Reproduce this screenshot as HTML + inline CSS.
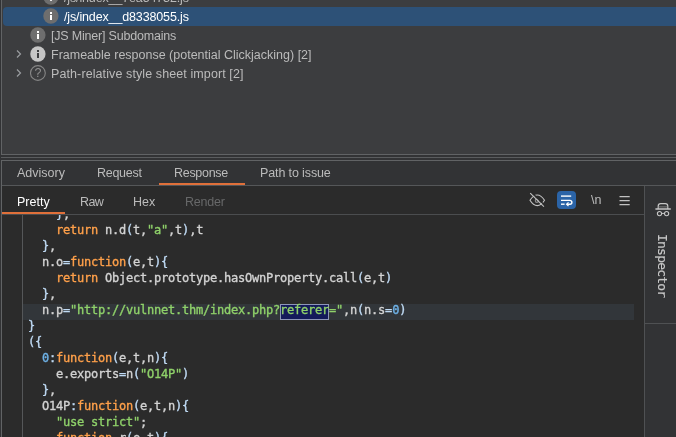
<!DOCTYPE html>
<html><head><meta charset="utf-8">
<style>
html,body{margin:0;padding:0;}
body{width:676px;height:437px;overflow:hidden;background:#323335;position:relative;font-family:"Liberation Sans",sans-serif;font-size:12.5px;color:#bbbbbb;}
.abs{position:absolute;}
.hl{position:absolute;background:#616365;}
.t{position:absolute;white-space:nowrap;line-height:19px;height:19px;margin-top:1px;will-change:transform;}
.ic{position:absolute;width:16px;height:16px;will-change:transform;}
#code{position:absolute;left:2px;top:215px;width:642px;height:222px;background:#2b2b2b;overflow:hidden;}
.ln{position:absolute;left:26px;height:16px;line-height:16px;white-space:pre;font-family:"DejaVu Sans Mono","Liberation Mono",monospace;font-size:12px;color:#d3d3d3;letter-spacing:-0.224px;will-change:transform;-webkit-text-stroke:0.35px;}
.b{color:#bfdaf4;}
.k{color:#ffa04a;}
.s{color:#8fd16a;}
.n{color:#6fb3e8;}
</style></head><body>
<!-- top panel -->
<div class="abs" style="left:2px;top:0;width:674px;height:154px;background:#3c3d3f;"></div>
<div class="hl" style="left:1px;top:0;width:1px;height:155px;"></div>
<div class="hl" style="left:1px;top:154px;width:675px;height:1px;"></div>
<div class="hl" style="left:1px;top:157px;width:675px;height:1px;background:#5a5c5e;"></div>
<div class="hl" style="left:1px;top:160px;width:675px;height:1px;"></div>
<div class="hl" style="left:1px;top:160px;width:1px;height:277px;"></div>

<!-- tree -->
<div class="abs" style="left:3px;top:7px;width:673px;height:19px;background:#2d5177;border-radius:4px 0 0 4px;"></div>

<div class="t" style="left:64px;top:-12px;letter-spacing:-0.14px;">/js/index__7ea54732.js</div>
<div class="t" style="left:64px;top:7px;color:#ffffff;letter-spacing:-0.14px;">/js/index__d8338055.js</div>
<div class="t" style="left:51px;top:26px;letter-spacing:-0.2px;">[JS Miner] Subdomains</div>
<div class="t" style="left:51px;top:45px;">Frameable response (potential Clickjacking) [2]</div>
<div class="t" style="left:51px;top:64px;letter-spacing:0.1px;">Path-relative style sheet import [2]</div>

<svg class="ic" style="left:43px;top:-11px;" viewBox="0 0 16 16"><circle cx="7.9" cy="8" r="7.65" fill="#6e6e6e"/><rect x="7" y="4" width="2" height="2" fill="#e6e6e6"/><rect x="7" y="7" width="2" height="5" fill="#e6e6e6"/></svg>
<svg class="ic" style="left:43px;top:8px;" viewBox="0 0 16 16"><circle cx="7.9" cy="8" r="7.65" fill="#6e6e6e"/><rect x="7" y="4" width="2" height="2" fill="#ffffff"/><rect x="7" y="7" width="2" height="5" fill="#ffffff"/></svg>
<svg class="ic" style="left:30px;top:27px;" viewBox="0 0 16 16"><circle cx="7.9" cy="8" r="7.65" fill="#6e6e6e"/><rect x="7" y="4" width="2" height="2" fill="#ffffff"/><rect x="7" y="7" width="2" height="5" fill="#ffffff"/></svg>
<svg class="ic" style="left:30px;top:46px;" viewBox="0 0 16 16"><circle cx="7.9" cy="8" r="7.65" fill="#c6c6c6"/><rect x="7" y="4" width="2" height="2" fill="#3c3d3f"/><rect x="7" y="7" width="2" height="5" fill="#3c3d3f"/></svg>
<svg class="ic" style="left:30px;top:65px;" viewBox="0 0 16 16"><circle cx="7.9" cy="8" r="7.4" fill="none" stroke="#868686" stroke-width="1.1"/><text x="7.9" y="12.3" text-anchor="middle" font-family="Liberation Sans, sans-serif" font-size="12.5" fill="#909090">?</text></svg>

<svg class="abs" style="left:15px;top:49px;width:8px;height:10px;" viewBox="0 0 8 10"><path d="M2 1.5 L5.5 5 L2 8.5" fill="none" stroke="#9a9da0" stroke-width="1.2"/></svg>
<svg class="abs" style="left:15px;top:68px;width:8px;height:10px;" viewBox="0 0 8 10"><path d="M2 1.5 L5.5 5 L2 8.5" fill="none" stroke="#9a9da0" stroke-width="1.2"/></svg>

<!-- tabs -->
<div class="t" style="left:17px;top:163px;">Advisory</div>
<div class="t" style="left:97px;top:163px;letter-spacing:-0.27px;">Request</div>
<div class="t" style="left:174px;top:163px;letter-spacing:-0.3px;">Response</div>
<div class="t" style="left:260px;top:163px;letter-spacing:-0.12px;">Path to issue</div>
<div class="abs" style="left:159px;top:183px;width:86px;height:2px;background:#e0703a;"></div>
<div class="hl" style="left:2px;top:185px;width:674px;height:1px;background:#555759;"></div>

<!-- inner area -->
<div class="abs" style="left:2px;top:186px;width:642px;height:29px;background:#2b2b2b;"></div>
<div class="t" style="left:17px;top:192px;color:#ffffff;">Pretty</div>
<div class="t" style="left:80px;top:192px;letter-spacing:-0.6px;">Raw</div>
<div class="t" style="left:133px;top:192px;">Hex</div>
<div class="t" style="left:185px;top:192px;color:#676869;letter-spacing:-0.2px;">Render</div>
<div class="hl" style="left:2px;top:214px;width:642px;height:1px;background:#4b4d4f;"></div>
<div class="abs" style="left:2px;top:212px;width:63px;height:2px;background:#e0703a;"></div>

<!-- toolbar icons -->
<svg class="abs" style="left:528px;top:191px;width:18px;height:18px;" viewBox="0 0 18 18"><g fill="none" stroke="#c2c2c2" stroke-width="1.15"><path d="M2 9.3 C5 4.5 8 4 9.25 4 C10.5 4 13.5 4.5 16.5 9.3 C13.5 14.1 10.5 14.6 9.25 14.6 C8 14.6 5 14.1 2 9.3 Z"/><circle cx="8.9" cy="9.7" r="1.6" stroke="#8e8e8e"/><path d="M3.5 1.2 L17.2 14.7" stroke="#2b2b2b" stroke-width="1.3"/><path d="M2.2 2.1 L15.9 15.6"/></g></svg>
<div class="abs" style="left:557px;top:191px;width:19px;height:18px;background:#2b64a7;border-radius:4px;"></div>
<svg class="abs" style="left:557px;top:191px;width:19px;height:18px;" viewBox="0 0 19 18"><g fill="none" stroke="#ffffff" stroke-width="1.4"><path d="M4 5.1 H14.2"/><path d="M4 9.4 H13 A1.9 1.9 0 0 1 13 13.2 H9.8"/><path d="M4 13.2 H7.6"/><path d="M11.5 11.4 L9.6 13.2 L11.5 15" stroke-width="1.2"/></g></svg>
<div class="t" style="left:591px;top:190px;">\n</div>
<svg class="abs" style="left:619px;top:195px;width:12px;height:12px;" viewBox="0 0 12 12"><path d="M0.5 1.7 H10.7 M0.5 5.7 H10.7 M0.5 9.7 H10.7" stroke="#c2c2c2" stroke-width="1.3"/></svg>

<!-- code -->
<div id="code">
<div class="abs" style="left:20px;top:0;width:1px;height:222px;background:#555759;"></div>
<div class="abs" style="left:21px;top:89px;width:611px;height:16px;background:#32363a;"></div>
<div class="abs" style="left:278px;top:89px;width:49px;height:16px;box-sizing:border-box;border:1px solid #8e96b8;background:#141a5a;"></div>
<div class="ln" style="top:-9px;">    <span class="b">}</span>,</div>
<div class="ln" style="top:7px;">    <span class="k">return</span> n.d<span class="b">(</span>t,<span class="s">"a"</span>,t<span class="b">)</span>,t</div>
<div class="ln" style="top:23px;">  <span class="b">}</span>,</div>
<div class="ln" style="top:39px;">  n.o<span class="b">=</span><span class="k">function</span><span class="b">(</span>e,t<span class="b">){</span></div>
<div class="ln" style="top:55px;">    <span class="k">return</span> Object.prototype.hasOwnProperty.call<span class="b">(</span>e,t<span class="b">)</span></div>
<div class="ln" style="top:71px;">  <span class="b">}</span>,</div>
<div class="ln" style="top:87px;">  n.p<span class="b">=</span><span class="s">"http://vulnnet.thm/index.php?referer="</span>,n<span class="b">(</span>n.s<span class="b">=</span><span class="n">0</span><span class="b">)</span></div>
<div class="ln" style="top:103px;"><span class="b">}</span></div>
<div class="ln" style="top:119px;"><span class="b">({</span></div>
<div class="ln" style="top:135px;">  <span class="n">0</span><span class="b">:</span><span class="k">function</span><span class="b">(</span>e,t,n<span class="b">){</span></div>
<div class="ln" style="top:151px;">    e.exports<span class="b">=</span>n<span class="b">(</span><span class="s">"O14P"</span><span class="b">)</span></div>
<div class="ln" style="top:167px;">  <span class="b">}</span>,</div>
<div class="ln" style="top:183px;">  O14P<span class="b">:</span><span class="k">function</span><span class="b">(</span>e,t,n<span class="b">){</span></div>
<div class="ln" style="top:199px;">    <span class="s">"use strict"</span>;</div>
<div class="ln" style="top:215px;">    <span class="k">function</span> r<span class="b">(</span>e,t<span class="b">){</span></div>

</div>

<!-- inspector -->
<div class="hl" style="left:644px;top:186px;width:1px;height:251px;background:#4f5153;"></div>
<div class="hl" style="left:645px;top:323px;width:31px;height:1px;background:#4f5153;"></div>
<div class="abs" style="left:655px;top:234px;width:14px;height:63px;">
<div style="position:absolute;left:14px;top:0;transform-origin:0 0;transform:rotate(90deg);white-space:nowrap;font-family:'DejaVu Sans Mono','Liberation Mono',monospace;font-size:13px;line-height:14px;height:14px;letter-spacing:-0.78px;color:#c6c6c6;will-change:transform;-webkit-text-stroke:0.2px;">Inspector</div>
</div>
<svg class="abs" style="left:654px;top:202px;width:18px;height:16px;" viewBox="0 0 18 16"><g fill="none" stroke="#c6c6c6" stroke-width="1.2"><path d="M1.4 7 H16.8" stroke-width="1.5"/><path d="M4.2 7 V4.2 A2.5 2.5 0 0 1 6.7 1.7 H11.3 A2.5 2.5 0 0 1 13.8 4.2 V7"/><path d="M4.8 4.9 H13.2" stroke="#7d7d7d" stroke-width="1"/><circle cx="5.5" cy="11.6" r="2.1" stroke-width="1.1"/><circle cx="12.6" cy="11.6" r="2.1" stroke-width="1.1"/><path d="M7.6 11.4 H10.5" stroke-width="1"/></g></svg>
</body></html>
